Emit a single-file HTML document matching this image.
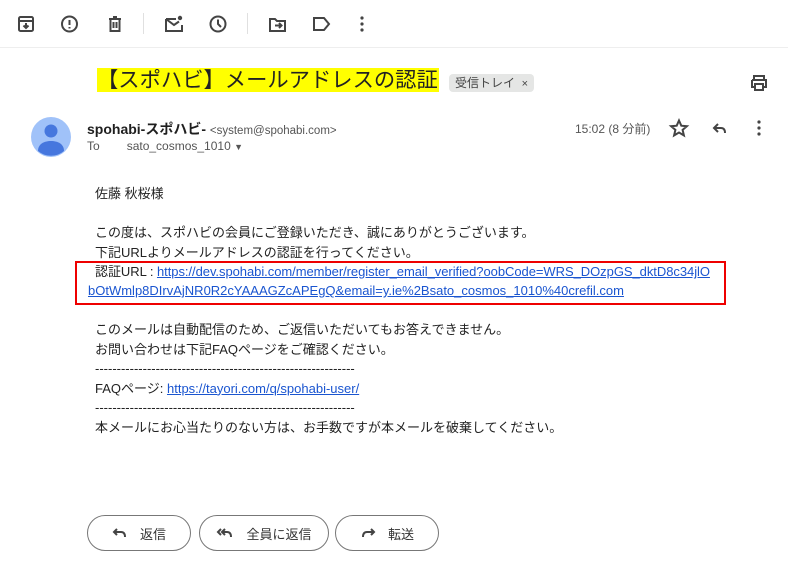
<!DOCTYPE html>
<html><head><meta charset="utf-8"><style>
*{margin:0;padding:0;box-sizing:border-box}
body{width:788px;height:569px;background:#fff;font-family:"Liberation Sans","Noto Sans CJK JP",sans-serif;color:#222;position:relative;overflow:hidden}
.a{position:absolute}
svg{position:absolute}
.ic{fill:none;stroke:#444;stroke-width:2}
.body{position:absolute;left:95px;top:184px;font-size:13px;line-height:19.5px;color:#222}
a{color:#1a55d0;text-decoration:underline}
.btn{position:absolute;top:515px;height:36px;border:1px solid #777;border-radius:18px;font-size:13px;color:#333;display:flex;align-items:center;justify-content:center;gap:12px}
</style></head><body>
<svg width="788" height="48" style="left:0;top:0">
<g class="ic" stroke-width="1.8">
<rect x="19" y="17" width="14" height="14" rx="1.5"/><path d="M19 21h14M26 23v5M23.5 25.5l2.5 2.5 2.5-2.5"/>
<circle cx="69.5" cy="24" r="7.5"/><path d="M69.5 20v5M69.5 27v1.5"/>
<path d="M109 19h12M113 17h4M110.5 19v12h9V19M113.5 22v6M116.5 22v6"/>
<path d="M166 19h10v-0M166 19v12h16v-6M166 19l8 6 5-3.5"/><circle cx="180" cy="18" r="2.2" fill="#444" stroke="none"/>
<circle cx="218" cy="24" r="7.5"/><path d="M218 19.5v4.5l3 3"/>
<path d="M270 19h5l2 2h8v10h-15z M275 25.5h6M279 23l2.5 2.5-2.5 2.5"/>
<path d="M314 18h10l5 6-5 6h-10z"/>
</g>
<g fill="#444"><circle cx="362" cy="18" r="1.6"/><circle cx="362" cy="24" r="1.6"/><circle cx="362" cy="30" r="1.6"/></g>
<rect x="143" y="13" width="1" height="21" fill="#e0e0e0"/><rect x="247" y="13" width="1" height="21" fill="#e0e0e0"/>
<rect x="0" y="47" width="788" height="1" fill="#eee"/>
</svg>
<div class="a" style="left:97px;top:68px;height:24px;background:#ffff00;font-size:21.3px;line-height:24px;color:#222;padding-right:1px;white-space:nowrap">【スポハビ】メールアドレスの認証</div>
<div class="a" style="left:449px;top:74px;height:18px;padding:0 6px;background:#e5e6e5;border-radius:4px;font-size:12px;line-height:18px;color:#444">受信トレイ&nbsp; <span style="font-size:11px">×</span></div>
<svg width="20" height="20" style="left:749px;top:73px"><g class="ic" stroke-width="1.8"><path d="M5 7V3h10v4M3 7h14v7h-3M6 14H3V7M6 11h8v6H6z"/></g></svg>
<svg width="40" height="40" style="left:31px;top:117px"><circle cx="20" cy="20" r="20" fill="#a0c2f9"/><circle cx="20" cy="14" r="6.5" fill="#4677de"/><path d="M7 34c0-7 6-10 13-10s13 3 13 10a20 20 0 0 1-26 0z" fill="#4677de"/></svg>
<div class="a" style="left:87px;top:119px;font-size:14px;font-weight:bold;color:#1f1f1f">spohabi-スポハビ- <span style="font-weight:normal;font-size:11.5px;color:#555">&lt;system@spohabi.com&gt;</span></div>
<div class="a" style="left:87px;top:139px;font-size:12px;color:#555">To<span style="margin-left:27px">sato_cosmos_1010</span> <span style="font-size:9px">▼</span></div>
<div class="a" style="left:575px;top:120px;font-size:12px;color:#555">15:02 (8 分前)</div>
<svg width="120" height="20" style="left:668px;top:118px"><g class="ic" stroke-width="1.6"><path d="M11 2.5l2.3 5.2 5.6.5-4.3 3.7 1.3 5.5L11 14.5 6.1 17.4l1.3-5.5L3.1 8.2l5.6-.5z"/><path d="M50 6l-4 4 4 4M46 10h7c3 0 4 2 4 5"/></g><g fill="#444"><circle cx="91" cy="4" r="1.6"/><circle cx="91" cy="10" r="1.6"/><circle cx="91" cy="16" r="1.6"/></g></svg>
<div class="body">
佐藤 秋桜様<br><br>
この度は、スポハビの会員にご登録いただき、誠にありがとうございます。<br>
下記URLよりメールアドレスの認証を行ってください。<br>
<span style="letter-spacing:-0.05px">認証URL : <a>https://dev.spohabi.com/member/register_email_verified?oobCode=WRS_DOzpGS_dktD8c34jlO</a></span><br>
</div>
<div class="a" style="left:88px;top:281px;font-size:13px;line-height:19.5px"><a>bOtWmlp8DIrvAjNR0R2cYAAAGZcAPEgQ&amp;email=y.ie%2Bsato_cosmos_1010%40crefil.com</a></div>
<div class="a" style="left:75px;top:261px;width:651px;height:44px;border:2px solid #e00"></div>
<div class="body" style="top:320px">
このメールは自動配信のため、ご返信いただいてもお答えできません。<br>
お問い合わせは下記FAQページをご確認ください。<br>
------------------------------------------------------------<br>
FAQページ: <a>https://tayori.com/q/spohabi-user/</a><br>
------------------------------------------------------------<br>
本メールにお心当たりのない方は、お手数ですが本メールを破棄してください。
</div>
<div class="btn" style="left:87px;width:104px"><svg width="16" height="14" style="position:static"><path class="ic" stroke-width="1.6" d="M5 3L2 6l3 3M2 6h7c3 0 4 2 4 5"/></svg>返信</div>
<div class="btn" style="left:199px;width:130px"><svg width="18" height="14" style="position:static"><path class="ic" stroke-width="1.6" d="M5 3L2 6l3 3M9 3L6 6l3 3M6 6h5c3 0 4 2 4 5"/></svg>全員に返信</div>
<div class="btn" style="left:335px;width:104px"><svg width="16" height="14" style="position:static"><path class="ic" stroke-width="1.6" d="M11 3l3 3-3 3M14 6H7c-3 0-4 2-4 5"/></svg>転送</div>
</body></html>
